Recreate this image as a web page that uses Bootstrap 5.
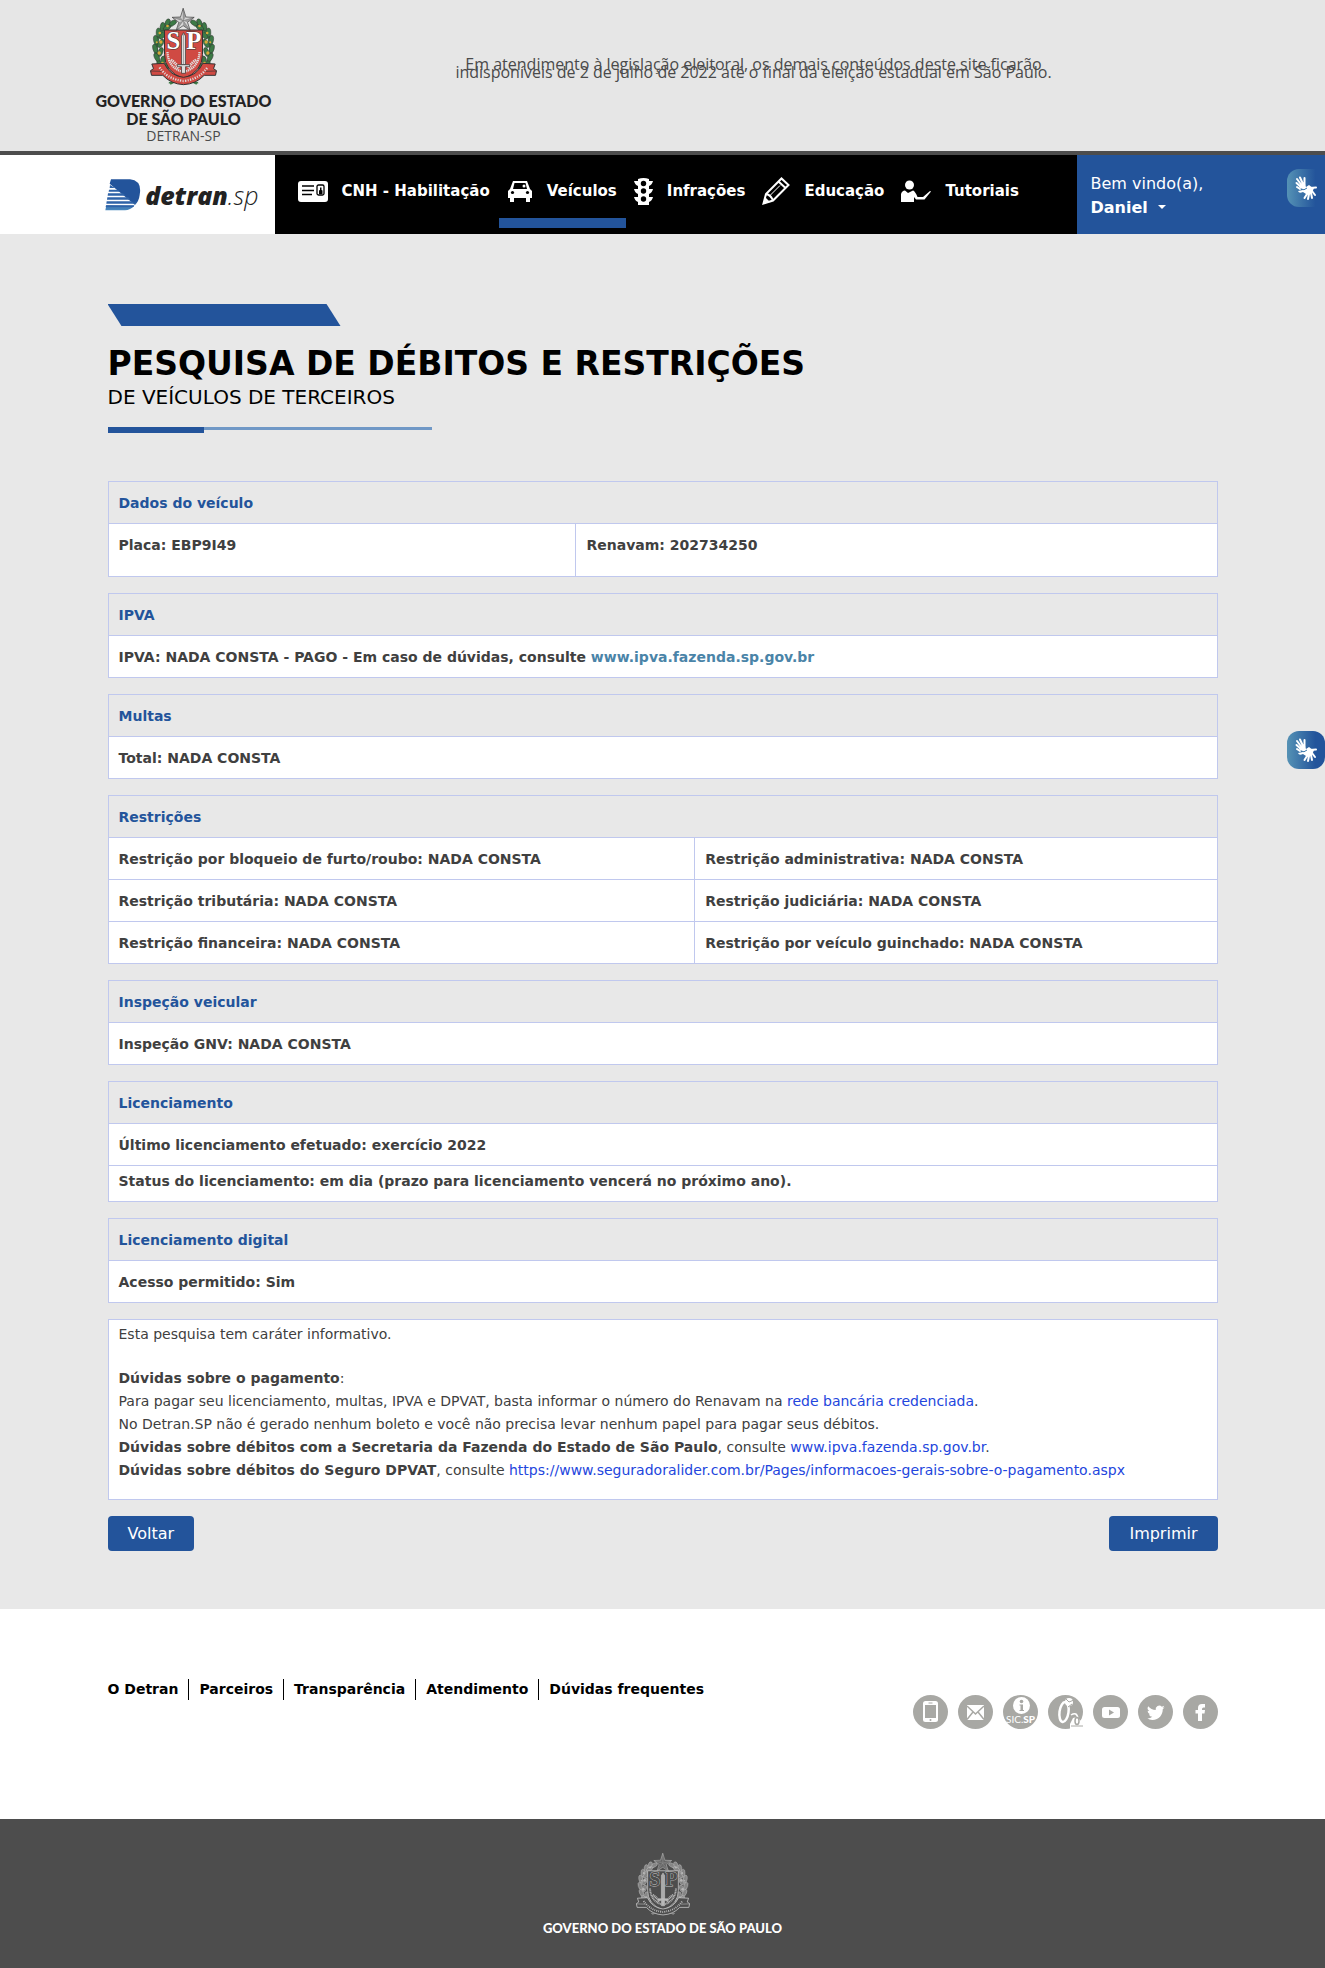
<!DOCTYPE html>
<html lang="pt-br">
<head>
<meta charset="utf-8">
<meta name="viewport" content="width=device-width, initial-scale=1">
<title>Detran.SP - Pesquisa de débitos e restrições</title>
<link href="https://cdn.jsdelivr.net/npm/bootstrap@5.3.0/dist/css/bootstrap.min.css" rel="stylesheet">
<style>
:root{--azul:#23549b;--cinza:#e8e8e8;--escuro:#4d4d4d;--linha:#c0c8ee}
body{font-family:"DejaVu Sans",sans-serif;font-size:14px;line-height:21px;color:#404040;background:#fff}
a{text-decoration:none}
.container{--bs-gutter-x:30px}
.gov-top{background:#e6e6e6;border-bottom:4px solid var(--escuro);min-height:155px}
.gov-top .container{--bs-gutter-x:0px}
.gov-brand{width:182px;padding-top:8px}
.gov-name{font:900 16px/18px Lato,sans-serif;color:#222;margin-top:6px}
.gov-unit{font:14px/16px "Open Sans",sans-serif;color:#4a4a4a}
.gov-notice{font:16px/8px "Open Sans",sans-serif;color:#4a4a4a;padding-top:60px}
.main-nav{min-height:79px}
.nav-logo{width:calc((100% - 1140px)/2 + 182px);min-width:182px}
.logo-word{font:italic 800 25px/32px "Open Sans",sans-serif;color:#222}
.logo-word span{font-weight:300}
.menu-bar{background:#000;width:802px;padding-left:15px}
.menu-bar a{color:#fff;font-weight:700;font-size:15px;white-space:nowrap;height:73px;border-bottom:10px solid transparent;padding:9px 9px 0 8px;gap:14px}
.menu-bar a.active{border-color:var(--azul)}
.user-box{background:var(--azul);color:#fff;font-size:16px;line-height:24px;padding:17px 0 0 14px}
.user-box button{color:#fff;font-weight:700;background:none;border:0;padding:0}
.user-box button::after{margin-left:10px;vertical-align:4px}
.libras{width:38px;height:38px;right:0;border-radius:12px;background:linear-gradient(90deg,#5592b5,#23549b 75%);border:0;padding:0}
.libras-top{top:169px}
.libras-side{top:731px}
.page-main{background:var(--cinza);padding:70px 0 58px}
.tab-shape{width:233px;height:22px;background:var(--azul);clip-path:polygon(0 0,94% 0,100% 100%,6% 100%)}
.page-main h1{font-size:33px;line-height:40px;font-weight:700;color:#000;margin:18px 0 0}
.page-main h2{font-size:20px;line-height:27px;font-weight:400;color:#000;margin:0 0 16px}
.title-rule{width:324px;height:6px;margin-bottom:48px;background:linear-gradient(#7098c6 0 0) 0 0/100% 3px no-repeat}
.title-rule::before{content:"";display:block;width:96px;height:6px;background:var(--azul)}
.data-table{font-weight:700;margin-bottom:16px;border-color:var(--linha);table-layout:fixed;border-collapse:collapse}
.data-table th,.data-table td{border:1px solid var(--linha);padding:11px 10px 9px;background:#fff;color:#404040;vertical-align:top;height:42px}
.data-table th{background:var(--cinza);color:var(--azul)}
.data-table .tall td{padding-bottom:20px;height:53px}
.data-table .tight td{padding:5px 10px 9px;height:36px}
.data-table a{color:#4a84a8}
.col-plate{width:42.2%}
.col-left{width:52.9%}
.info-box{background:#fff;border:1px solid var(--linha);padding:3px 10px 17px;line-height:23px;margin-bottom:16px}
.info-box p{margin:0 0 21px}
.info-box a{color:#2346dd}
.btn-detran{--bs-btn-bg:var(--azul);--bs-btn-color:#fff;--bs-btn-hover-bg:#1b447f;--bs-btn-hover-color:#fff;--bs-btn-padding-x:19px;--bs-btn-padding-y:6px;--bs-btn-font-size:16px;--bs-btn-line-height:21px;--bs-btn-border-radius:4px}
.foot-links{min-height:210px;padding-top:70px}
.foot-links nav a{color:#000;font-weight:700;padding:0 10px;border-left:1px solid #000}
.foot-links nav a:first-child{padding-left:0;border:0}
.socials{gap:10px;padding-top:16px}
.socials svg{display:block}
.foot-gov{background:var(--escuro);min-height:149px;padding-top:34px}
.foot-gov p{font:900 13px/18px Lato,sans-serif;color:#fff;margin:3px 0 0}
.crest-color{--sh:#d04a43;--rb:#d04a43;--lf:#3c7a46;--st:#d6d6d6;--ol:#333;--tx:#fff;--br:#d9a93a;--sv:#ddd}
.crest-mono{--sh:#4d4d4d;--rb:#4d4d4d;--lf:#858585;--st:#666;--ol:#c4c4c4;--tx:#4d4d4d;--br:#b5b5b5;--sv:#b8b8b8}
</style>
</head>
<body class="position-relative">
<svg width="0" height="0" class="position-absolute" aria-hidden="true">
<defs>
<symbol id="half-wreath" viewBox="0 0 200 234" overflow="visible">
<path d="M66 50C32 60 18 90 18 122c0 40 20 80 58 98" fill="none" stroke="var(--lf)" stroke-width="10"/>
<g fill="var(--lf)" stroke="var(--ol)" stroke-width="1.5">
<ellipse cx="68" cy="45" rx="12" ry="7" transform="rotate(-30 68 45)"/><ellipse cx="52" cy="44" rx="7" ry="12" transform="rotate(25 52 44)"/><ellipse cx="37" cy="56" rx="7" ry="13" transform="rotate(10 37 56)"/><ellipse cx="50" cy="60" rx="7" ry="12" transform="rotate(60 50 60)"/><ellipse cx="25" cy="74" rx="7" ry="14"/><ellipse cx="37" cy="82" rx="7" ry="13" transform="rotate(40 37 82)"/><ellipse cx="17" cy="96" rx="7" ry="14" transform="rotate(-8 17 96)"/><ellipse cx="32" cy="106" rx="7" ry="14" transform="rotate(30 32 106)"/><ellipse cx="15" cy="122" rx="7" ry="14" transform="rotate(-15 15 122)"/><ellipse cx="31" cy="132" rx="7" ry="14" transform="rotate(20 31 132)"/><ellipse cx="20" cy="148" rx="7" ry="14" transform="rotate(-25 20 148)"/><ellipse cx="38" cy="158" rx="7" ry="14" transform="rotate(10 38 158)"/><ellipse cx="30" cy="170" rx="7" ry="13" transform="rotate(-35 30 170)"/><ellipse cx="48" cy="178" rx="7" ry="13"/>
</g>
<g fill="var(--br)"><circle cx="52" cy="54" r="4"/><circle cx="29" cy="75" r="4"/><circle cx="32" cy="102" r="5"/><circle cx="20" cy="103" r="3"/><circle cx="27" cy="135" r="5"/><circle cx="37" cy="165" r="4"/></g>
<path d="M82 213Q70 226 56 224M60 228L80 218" stroke="var(--lf)" stroke-width="5" fill="none"/>
</symbol>
<symbol id="crest" viewBox="0 0 200 234">
<use href="#half-wreath" width="200" height="234"/>
<g transform="translate(200 0) scale(-1 1)"><use href="#half-wreath" width="200" height="234"/></g>
<path d="M43 66H157V140Q157 190 100 212 43 190 43 140Z" fill="var(--sh)" stroke="var(--ol)" stroke-width="3"/>
<g fill="none" stroke="var(--sv)" stroke-width="7" stroke-dasharray="4 2"><path d="M52 132Q54 176 92 190M148 132Q146 176 108 190"/><path d="M62 156Q76 164 86 182M138 156Q124 164 114 182" stroke-width="9"/></g>
<g font-family="Liberation Serif,serif" font-weight="700" font-size="74" fill="var(--tx)" stroke="var(--ol)" stroke-width="3" paint-order="stroke"><text x="49" y="124">S</text><text x="108" y="124">P</text></g>
<path d="M94 84L100 74 106 84V170H94Z" fill="var(--sv)" stroke="var(--ol)" stroke-width="2"/>
<path d="M100 76V168" stroke="#888" stroke-width="2"/>
<path d="M82 170H118V176H106V196H94V176H82Z" fill="var(--sv)" stroke="var(--ol)" stroke-width="2"/>
<path d="M5 168L42 166Q60 204 100 208 140 204 158 166L195 168 190 182 199 188 196 202 162 202Q138 228 100 230 62 228 38 202L4 202 1 188 10 182Z" fill="var(--rb)" stroke="var(--ol)" stroke-width="3"/>
<path d="M28 178Q52 214 100 219 148 214 172 178" fill="none" stroke="var(--sv)" stroke-width="7" stroke-dasharray="4 4 3 4"/>
<path d="M2 189L34 190M198 189L166 190" stroke="var(--ol)" stroke-width="2"/>
<path d="M99 1L107 27 132 28 112 43 120 67 99 53 78 67 86 43 66 28 91 27Z" fill="var(--st)" stroke="var(--ol)" stroke-width="2"/>
<path d="M99 1V38L78 67M99 38L132 28M99 38L66 28M99 38L120 67" fill="none" stroke="var(--ol)" stroke-width="1"/>
<path d="M99 1L107 27 99 38ZM132 28L112 43 99 38ZM120 67L99 53V38ZM78 67L86 43 99 38ZM66 28L91 27 99 38Z" fill="#777" opacity=".6"/>
</symbol>
<symbol id="hands" viewBox="0 0 38 38">
<g fill="none" stroke="#fff" stroke-width="2" stroke-linecap="round"><path d="M14 18L9.500 14M14.500 16L10 10M16 15L13 8.500M17.500 16V9M13 20L10 18"/><path d="M20 25L17.500 29M22 25L21 30M24 24L25 29M25 22L28 26M23 19L29 18.500"/></g>
<path d="M12 18Q14 13 18 15L19 18 22 16Q24 18 27 19L25 24Q22 27 19 25L16 23Q12 25 11 22L16 21Z" fill="#fff"/>
<path d="M14 20Q17 22 20 19" stroke="#3c77a9" fill="none"/>
</symbol>
</defs>
</svg>

<header class="gov-top">
<div class="container d-flex">
<div class="gov-brand text-center">
<svg class="crest-color" width="67" height="78" role="img" aria-label="Brasão do Estado de São Paulo"><use href="#crest"/></svg>
<div class="gov-name">GOVERNO DO ESTADO<br>DE SÃO PAULO</div>
<div class="gov-unit">DETRAN-SP</div>
</div>
<div class="gov-notice flex-grow-1 text-center">Em atendimento à legislação eleitoral, os demais conteúdos deste site ficarão<br>indisponíveis de 2 de julho de 2022 até o final da eleição estadual em São Paulo.</div>
</div>
</header>

<div class="main-nav d-flex">
<a href="#" class="nav-logo d-flex justify-content-end align-items-center pe-3 flex-shrink-0">
<svg width="36" height="32" viewBox="0 0 108 96"><defs><linearGradient id="dg" x1="0" y1="1" x2="0" y2="0"><stop offset="0" stop-color="#4b8ac0"/><stop offset=".3" stop-color="#23549b"/></linearGradient></defs><path d="M18 1H75Q112 5 104 48 102 66 90 78L14 14ZM88 80Q76 93 60 94H1L4 79Z" fill="url(#dg)"/><path d="M15 18L30 27H14ZM12 32H38L46 38H11ZM9 43H54L62 50H8ZM7 55H70L76 62H6ZM5 67H80L88 74H4ZM3 79H88L85 84H2Z" fill="#2f63a8"/></svg>
<span class="logo-word ms-1">detran<span>.sp</span></span>
</a>
<nav class="menu-bar d-flex flex-shrink-0">
<a href="#" class="d-flex align-items-center"><svg width="30" height="21" viewBox="0 0 30 21"><rect width="30" height="21" rx="3" fill="#fff"/><path d="M4 5H16M4 9.500H16M4 13.500H14" stroke="#000" stroke-width="1.600"/><rect x="19" y="4" width="7" height="10" rx="1.500" fill="none" stroke="#000" stroke-width="1.300"/><path d="M21 13V9.500L22 9V6.500H23.500V9L24.500 9.500V13Z" fill="#000"/></svg>CNH - Habilitação</a>
<a href="#" class="active d-flex align-items-center"><svg width="26" height="22" viewBox="0 0 26 22"><path d="M6 1H20L23 9 25 11V18H23V22H19V18H7V22H3V18H1V11L3 9Z" fill="#fff"/><path d="M7.500 3H18.500L20 9H6Z" fill="#000"/><circle cx="17" cy="6" r="1.500" fill="#fff"/><circle cx="5.500" cy="12.500" r="1.600"/><circle cx="20.500" cy="12.500" r="1.600"/></svg>Veículos</a>
<a href="#" class="d-flex align-items-center"><svg width="19" height="27" viewBox="0 0 19 27"><path d="M4 1Q9.500-1 15 1V3H19Q18 7 15 8V11H19Q18 15 15 16V19H19Q18 23 15 24V27H4V24Q1 23 0 19H4V16Q1 15 0 11H4V8Q1 7 0 3H4Z" fill="#fff"/><circle cx="9.500" cy="5.500" r="2.700"/><circle cx="9.500" cy="13" r="2.700"/><circle cx="9.500" cy="21" r="2.700"/></svg>Infrações</a>
<a href="#" class="d-flex align-items-center"><svg width="28" height="28" viewBox="0 0 28 28"><g fill="none" stroke="#fff" stroke-width="2"><path d="M1.500 26.500L4 17 19.500 1.500 26.500 8 11 23.500ZM4 17Q9 18 11 23.500M16.500 4.500L23.500 11"/><path d="M8 18.500L18 8.500" stroke-width="1"/></g><path d="M1 27L3 20 8 25Z" fill="#fff"/></svg>Educação</a>
<a href="#" class="d-flex align-items-center"><svg width="30" height="22" viewBox="0 0 30 22"><circle cx="8.500" cy="5" r="4.500" fill="#fff"/><path d="M0 22V14Q1 10.500 4 10.500L7 13 12 10.500Q14 11 16.500 17H22L29 11 30 11.500 23.500 19.500H15L13 17V22Z" fill="#fff"/></svg>Tutoriais</a>
</nav>
<div class="user-box flex-grow-1">Bem vindo(a),<br><button type="button" class="dropdown-toggle">Daniel</button></div>
</div>
<button type="button" class="libras libras-top position-absolute" aria-label="Acessível em Libras"><svg width="38" height="38"><use href="#hands"/></svg></button>
<button type="button" class="libras libras-side position-absolute" aria-label="Tradutor de Libras"><svg width="38" height="38"><use href="#hands"/></svg></button>

<main class="page-main">
<div class="container">
<div class="tab-shape"></div>
<h1>PESQUISA DE DÉBITOS E RESTRIÇÕES</h1>
<h2>DE VEÍCULOS DE TERCEIROS</h2>
<div class="title-rule"></div>

<table class="data-table w-100"><colgroup><col class="col-plate"><col></colgroup>
<tr><th colspan="2">Dados do veículo</th></tr>
<tr class="tall"><td>Placa: EBP9I49</td><td>Renavam: 202734250</td></tr></table>
<table class="data-table w-100">
<tr><th>IPVA</th></tr>
<tr><td>IPVA: NADA CONSTA - PAGO - Em caso de dúvidas, consulte <a href="#">www.ipva.fazenda.sp.gov.br</a></td></tr></table>
<table class="data-table w-100">
<tr><th>Multas</th></tr>
<tr><td>Total: NADA CONSTA</td></tr></table>
<table class="data-table w-100"><colgroup><col class="col-left"><col></colgroup>
<tr><th colspan="2">Restrições</th></tr>
<tr><td>Restrição por bloqueio de furto/roubo: NADA CONSTA</td><td>Restrição administrativa: NADA CONSTA</td></tr>
<tr><td>Restrição tributária: NADA CONSTA</td><td>Restrição judiciária: NADA CONSTA</td></tr>
<tr><td>Restrição financeira: NADA CONSTA</td><td>Restrição por veículo guinchado: NADA CONSTA</td></tr></table>
<table class="data-table w-100">
<tr><th>Inspeção veicular</th></tr>
<tr><td>Inspeção GNV: NADA CONSTA</td></tr></table>
<table class="data-table w-100">
<tr><th>Licenciamento</th></tr>
<tr><td>Último licenciamento efetuado: exercício 2022</td></tr>
<tr class="tight"><td>Status do licenciamento: em dia (prazo para licenciamento vencerá no próximo ano).</td></tr></table>
<table class="data-table w-100">
<tr><th>Licenciamento digital</th></tr>
<tr><td>Acesso permitido: Sim</td></tr></table>

<div class="info-box">
<p>Esta pesquisa tem caráter informativo.</p>
<b>Dúvidas sobre o pagamento</b>:<br>
Para pagar seu licenciamento, multas, IPVA e DPVAT, basta informar o número do Renavam na <a href="#">rede bancária credenciada</a>.<br>
No Detran.SP não é gerado nenhum boleto e você não precisa levar nenhum papel para pagar seus débitos.<br>
<b>Dúvidas sobre débitos com a Secretaria da Fazenda do Estado de São Paulo</b>, consulte <a href="#">www.ipva.fazenda.sp.gov.br</a>.<br>
<b>Dúvidas sobre débitos do Seguro DPVAT</b>, consulte <a href="#">https://www.seguradoralider.com.br/Pages/informacoes-gerais-sobre-o-pagamento.aspx</a>
</div>
<div class="d-flex justify-content-between">
<button type="button" class="btn btn-detran">Voltar</button>
<button type="button" class="btn btn-detran">Imprimir</button>
</div>
</div>
</main>

<footer>
<div class="foot-links"><div class="container d-flex justify-content-between align-items-start">
<nav class="d-flex"><a href="#">O Detran</a><a href="#">Parceiros</a><a href="#">Transparência</a><a href="#">Atendimento</a><a href="#">Dúvidas frequentes</a></nav>
<div class="socials d-flex">
<a href="#" aria-label="Aplicativos"><svg width="35" height="34" viewBox="0 0 35 34"><ellipse cx="17.500" cy="17" rx="17.500" ry="17" fill="#a8a8a4"/><rect x="10" y="6" width="15" height="21" rx="2.500" fill="#fff"/><rect x="12" y="10" width="11" height="13" fill="#a8a8a4"/><path d="M15.500 8H19.500" stroke="#a8a8a4"/><circle cx="17.500" cy="25" r="1" fill="#a8a8a4"/></svg></a>
<a href="#" aria-label="E-mail"><svg width="35" height="34" viewBox="0 0 35 34"><ellipse cx="17.500" cy="17" rx="17.500" ry="17" fill="#a8a8a4"/><rect x="9" y="10" width="17" height="15" fill="#fff"/><path d="M9 11L17.500 19 26 11M9 24.500L15 17M26 24.500L20 17" fill="none" stroke="#a8a8a4" stroke-width="1.500"/></svg></a>
<a href="#" aria-label="SIC.SP"><svg width="35" height="34" viewBox="0 0 35 34"><ellipse cx="17.500" cy="17" rx="17.500" ry="17" fill="#a8a8a4"/><circle cx="18.500" cy="10.500" r="8.500" fill="#fff"/><circle cx="18.500" cy="6.500" r="1.800" fill="#a8a8a4"/><path d="M16.500 9.500H20V15H21V16H16.500V15H17.500V10.500H16.500Z" fill="#a8a8a4"/><text x="3" y="27.500" font-family="Lato,sans-serif" font-size="10" fill="#fff">SIC.<tspan font-weight="900">SP</tspan></text></svg></a>
<a href="#" aria-label="Ouvidoria"><svg width="35" height="34" viewBox="0 0 35 34"><ellipse cx="17.500" cy="17" rx="17.500" ry="17" fill="#a8a8a4"/><ellipse cx="16" cy="17" rx="4.500" ry="10" transform="rotate(8 16 17)" fill="none" stroke="#fff" stroke-width="2.500"/><circle cx="21" cy="7" r="4" fill="#fff"/><path d="M18 4L21 7 26 5M20 12L24 9" stroke="#a8a8a4" fill="none"/><path d="M22 34V29L25 23 29 22 33 26 35 31V34Z" fill="#fff"/><path d="M23 20Q29 16 30 24" stroke="#fff" fill="none" stroke-width="1.500"/><ellipse cx="29" cy="26" rx="2" ry="3.500" fill="none" stroke="#a8a8a4" stroke-width="1.500"/><path d="M23 31H35" stroke="#a8a8a4"/></svg></a>
<a href="#" aria-label="YouTube"><svg width="35" height="34" viewBox="0 0 35 34"><ellipse cx="17.500" cy="17" rx="17.500" ry="17" fill="#a8a8a4"/><rect x="9" y="12" width="18" height="11" rx="2.500" fill="#fff"/><path d="M16 14.500L21 17.500 16 20.500Z" fill="#a8a8a4"/></svg></a>
<a href="#" aria-label="Twitter"><svg width="35" height="34" viewBox="0 0 35 34"><ellipse cx="17.500" cy="17" rx="17.500" ry="17" fill="#a8a8a4"/><path transform="translate(9 9.500) scale(1.100)" d="M5 14c6 0 9.300-5 9.300-9.300v-.4A6.700 6.700 0 0 0 16 2.500a6.600 6.600 0 0 1-1.900.6A3.300 3.300 0 0 0 15.600 1.200a6.600 6.600 0 0 1-2.100.8 3.300 3.300 0 0 0-5.600 3A9.300 9.300 0 0 1 1.100 1.600a3.300 3.300 0 0 0 1 4.400A3.300 3.300 0 0 1 .6 5.600a3.300 3.300 0 0 0 2.600 3.200 3.200 3.200 0 0 1-1.500.1 3.300 3.300 0 0 0 3.100 2.300A6.600 6.600 0 0 1 0 12.600 9.300 9.300 0 0 0 5 14" fill="#fff"/></svg></a>
<a href="#" aria-label="Facebook"><svg width="35" height="34" viewBox="0 0 35 34"><ellipse cx="17.500" cy="17" rx="17.500" ry="17" fill="#a8a8a4"/><path d="M15 26V18.500H12.500V15H15V13Q15 9 19 9H22V12.500H20.500Q19 12.500 19 14V15H22L21.500 18.500H19V26Z" fill="#fff"/></svg></a>
</div>
</div></div>
<div class="foot-gov text-center">
<svg class="crest-mono" width="54" height="63" role="img" aria-label="Brasão do Estado de São Paulo"><use href="#crest"/></svg>
<p>GOVERNO DO ESTADO DE SÃO PAULO</p>
</div>
</footer>
<script src="https://cdn.jsdelivr.net/npm/bootstrap@5.3.0/dist/js/bootstrap.bundle.min.js"></script>
</body>
</html>
